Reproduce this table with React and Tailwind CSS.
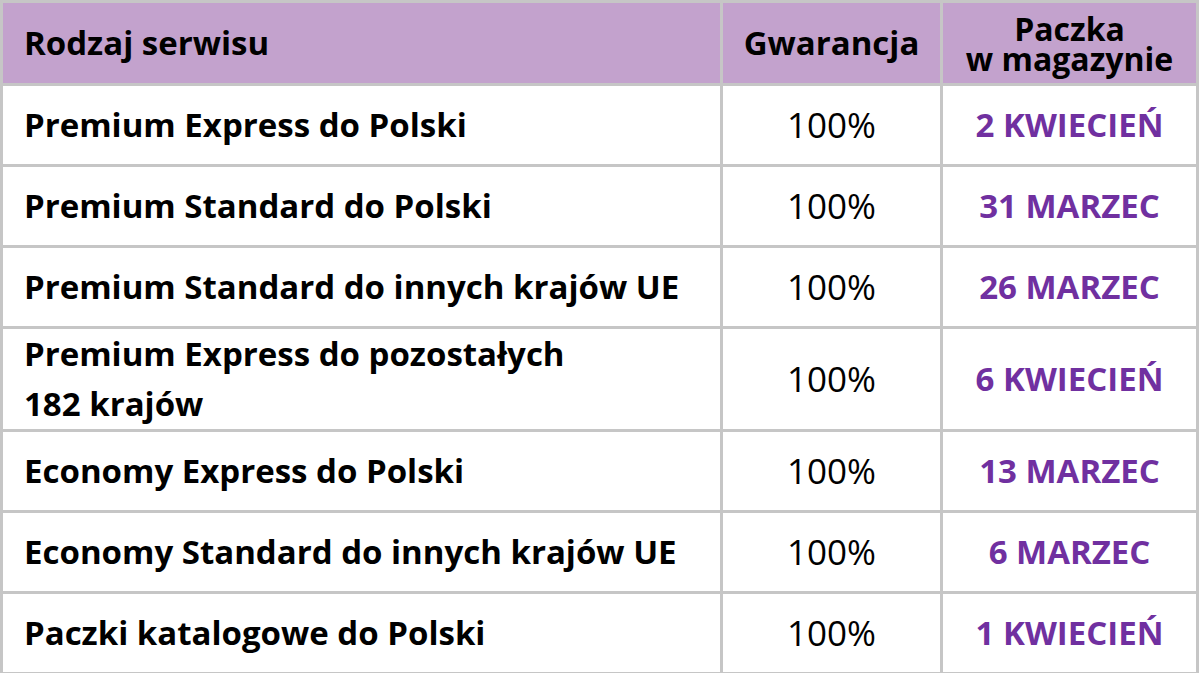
import React from 'react';

const rows = [
  { name: 'Premium Express do Polski', date: '2 KWIECIEŃ' },
  { name: 'Premium Standard do Polski', date: '31 MARZEC' },
  { name: 'Premium Standard do innych krajów UE', date: '26 MARZEC' },
  { name: 'Premium Express do pozostałych\n182 krajów', date: '6 KWIECIEŃ', tall: true },
  { name: 'Economy Express do Polski', date: '13 MARZEC' },
  { name: 'Economy Standard do innych krajów UE', date: '6 MARZEC' },
  { name: 'Paczki katalogowe do Polski', date: '1 KWIECIEŃ' },
];

const App = () => {
  return (
    <div className="w-[1200px] h-[673px] bg-white" style={{ fontFamily: '"Open Sans", Lato, sans-serif' }}>
      <table className="w-[1199px] border-collapse border-[3px] border-[#c6c6c6] table-fixed">
        <colgroup>
          <col className="w-[720px]" />
          <col className="w-[220px]" />
          <col />
        </colgroup>
        <thead>
          {/* Header */}
          <tr className="h-[83px] bg-[#c3a2cd] text-black">
            <th className="border-[3px] border-[#c6c6c6] pl-[21px] text-left text-[33px] font-bold">Rodzaj serwisu</th>
            <th className="border-[3px] border-[#c6c6c6] text-center text-[33px] font-bold">Gwarancja</th>
            <th className="border-[3px] border-[#c6c6c6] text-center text-[32px] font-bold leading-[30px] pt-[2px] whitespace-nowrap">
              Paczka
              <br />
              w magazynie
            </th>
          </tr>
        </thead>
        <tbody>
          {rows.map((r) => (
            <tr key={r.name} className={r.tall ? 'h-[102px]' : 'h-[81px]'}>
              <td className="border-[3px] border-[#c6c6c6] pl-[21px] text-left text-[33px] font-bold text-black leading-[50px] whitespace-pre-line">
                {r.name}
              </td>
              <td className="border-[3px] border-[#c6c6c6] text-center text-[35px] text-black">100%</td>
              <td className="border-[3px] border-[#c6c6c6] text-center text-[33px] font-bold text-[#7030a0] whitespace-nowrap">{r.date}</td>
            </tr>
          ))}
        </tbody>
      </table>
    </div>
  );
};

export default App;
